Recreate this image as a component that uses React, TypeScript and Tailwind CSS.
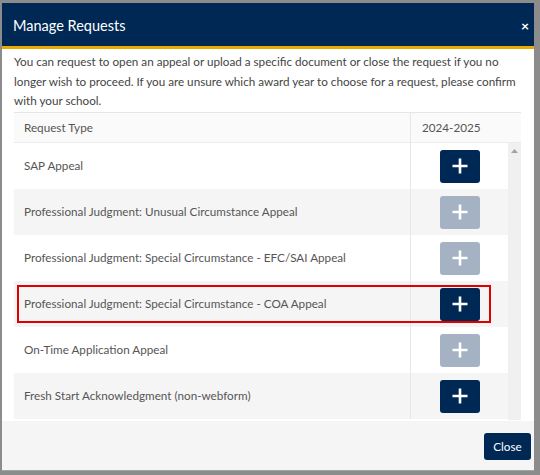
import React from 'react';

type Row = { label: string; enabled: boolean; highlight?: boolean };

const ROWS: Row[] = [
  { label: 'SAP Appeal', enabled: true },
  { label: 'Professional Judgment: Unusual Circumstance Appeal', enabled: false },
  { label: 'Professional Judgment: Special Circumstance - EFC/SAI Appeal', enabled: false },
  { label: 'Professional Judgment: Special Circumstance - COA Appeal', enabled: true, highlight: true },
  { label: 'On-Time Application Appeal', enabled: false },
  { label: 'Fresh Start Acknowledgment (non-webform)', enabled: true },
];

function PlusButton({ enabled }: { enabled: boolean }) {
  return (
    <button
      disabled={!enabled}
      className={`w-[40px] h-[33px] rounded-[3px] flex items-center justify-center ${enabled ? 'bg-[#002855]' : 'bg-[#a5b2c3]'}`}
    >
      <svg width="18" height="18" viewBox="0 0 18 18">
        <path d="M9 1.5v15M1.5 9h15" stroke="#fff" strokeWidth="2.6" strokeLinecap="butt" />
      </svg>
    </button>
  );
}

export default function App() {
  return (
    <div className="w-[540px] h-[475px] bg-[#8c8c8c] pt-[3px] pl-[2px] pr-[6px] font-['Lato','Liberation_Sans',sans-serif] overflow-hidden">
      <div className="h-[468px] flex flex-col bg-white border-b border-[#8fae98]">
        {/* header */}
        <div className="h-[46px] shrink-0 bg-[#002855] border-b-[3px] border-[#eaaa00] flex items-center justify-between pl-[11px] pr-[5px]">
          <span className="text-white text-[14.5px] leading-none mt-[3px]">Manage Requests</span>
          <span className="text-white text-[14px] font-bold leading-none mt-[2px]">×</span>
        </div>

        {/* body */}
        <div className="flex-1 min-h-0 pl-[12px] pr-[13px] pt-[3px] pb-[2px] flex flex-col">
          <p className="text-[11.7px] leading-[19.5px] text-[#444]">
            You can request to open an appeal or upload a specific document or close the request if you no<br />
            longer wish to proceed. If you are unsure which award year to choose for a request, please confirm<br />
            with your school.
          </p>

          <div className="mt-[1.5px] flex flex-col">
            <div className="flex h-[30px] bg-[#fafafa] border-t border-[#e6e6e6] text-[11.7px] text-[#555]">
              <div className="w-[397px] pl-[10px] flex items-center border-r border-[#e6e6e6]">Request Type</div>
              <div className="flex-1 pl-[11px] flex items-center">2024-2025</div>
            </div>

            <div className="flex h-[278px] overflow-hidden border-t border-[#ececec]">
              <div className="flex-1 flex flex-col">
                {ROWS.map((r, i) => (
                  <div key={r.label} className={`relative shrink-0 flex h-[46px] ${i % 2 ? 'bg-[#f5f5f5]' : 'bg-white'}`}>
                    <div className="w-[397px] pl-[10px] flex items-center border-r border-[#e6e6e6] text-[11.7px] text-[#555]">
                      {r.label}
                    </div>
                    <div className="flex-1 flex items-center justify-center">
                      <PlusButton enabled={r.enabled} />
                    </div>
                    {r.highlight && (
                      <div className="absolute left-[3px] top-[4px] w-[474px] h-[38px] border-2 border-[#e00000] pointer-events-none" />
                    )}
                  </div>
                ))}
              </div>
              <div className="w-[13px] bg-[#f0f0f0] flex justify-center pt-[6px]">
                <svg width="7" height="4" viewBox="0 0 7 4">
                  <path d="M0 4L3.5 0L7 4Z" fill="#a3a3a3" />
                </svg>
              </div>
            </div>
          </div>
        </div>

        {/* footer */}
        <div className="h-[49px] shrink-0 bg-[#f5f5f5] flex justify-end items-start pt-[12px] pr-[3px]">
          <button className="w-[47px] h-[27px] rounded-[3px] bg-[#002855] text-white text-[11.7px]">Close</button>
        </div>
      </div>
    </div>
  );
}
